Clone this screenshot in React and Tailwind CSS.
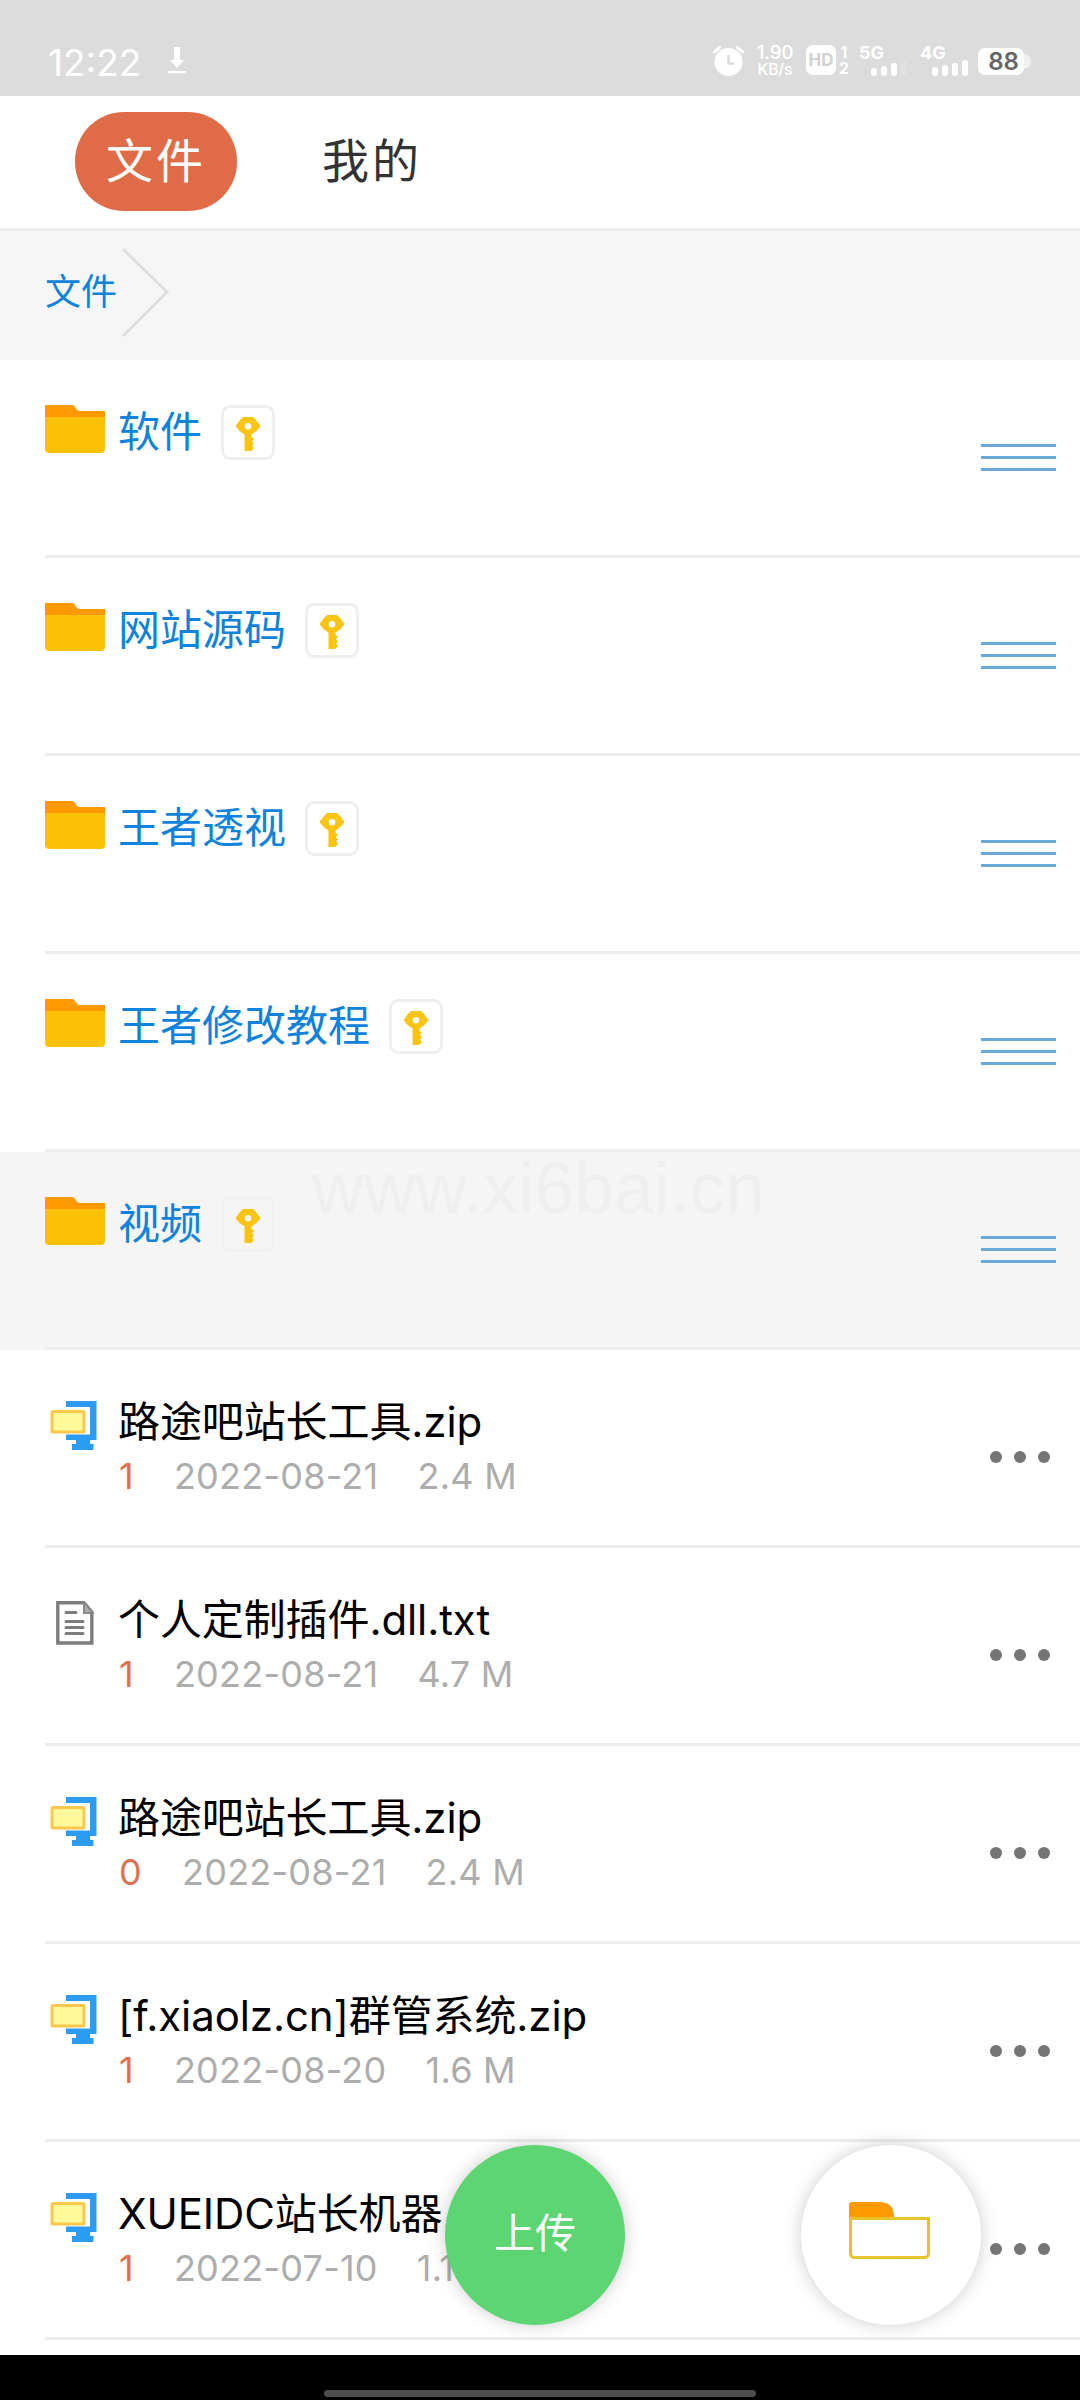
const folders = [
    { name: "软件" },
    { name: "网站源码" },
    { name: "王者透视" },
    { name: "王者修改教程" },
    { name: "视频", active: true },
];

const files = [
    { id: 1, name: "路途吧站长工具.zip", type: "zip", count: 1, date: "2022-08-21", size: "2.4 M" },
    { id: 2, name: "个人定制插件.dll.txt", type: "txt", count: 1, date: "2022-08-21", size: "4.7 M" },
    { id: 3, name: "路途吧站长工具.zip", type: "zip", count: 0, date: "2022-08-21", size: "2.4 M" },
    { id: 4, name: "[f.xiaolz.cn]群管系统.zip", type: "zip", count: 1, date: "2022-08-20", size: "1.6 M" },
    { id: 5, name: "XUEIDC站长机器.", type: "zip", count: 1, date: "2022-07-10", size: "1.1" },
];

function FolderIcon() {
    return (
        <svg width="60" height="48" viewBox="0 0 60 48" className="shrink-0">
            <path d="M0 0H27Q29 0 30 2L32 5Q33 6 35 6H60V20H0Z" fill="#ff9900" />
            <path d="M0 12H60V44Q60 48 56 48H4Q0 48 0 44Z" fill="#fdc107" />
        </svg>
    );
}

function KeyIcon() {
    return (
        <svg width="26" height="34" viewBox="0 0 26 34" className="mt-[2px]">
            <path
                d="M8 0H18L21 3L25.5 9L21.5 14L16.5 17.5V20L19 21.5L17 24L19 26.5L17 28.5L19 31L16 34H9.5V17.5L4.5 14L0.5 9L5 3Z M13 6A3.3 3.3 0 1 0 13 12.6A3.3 3.3 0 1 0 13 6Z"
                fill="#fbc312"
                fillRule="evenodd"
            />
        </svg>
    );
}

function ZipIcon() {
    return (
        <svg width="48" height="49" viewBox="0 0 48 49" className="shrink-0">
            <path d="M16 0H46.5V39H40V43H43.5V49H22V43H26V39H16V33.5H40V6H16Z" fill="#2b9cf2" />
            <rect x="2" y="10.5" width="32" height="20.5" rx="1" fill="#fff99c" stroke="#fbc84c" strokeWidth="3" />
        </svg>
    );
}

function TxtIcon() {
    return (
        <svg width="38" height="44" viewBox="0 0 38 44" className="shrink-0">
            <path d="M1.8 1.8H28L35.8 11V42H1.8Z" fill="#fff" stroke="#7d7d7d" strokeWidth="3.4" />
            <path d="M28 1V12H37Z" fill="#aaa" stroke="#8a8a8a" strokeWidth="2" />
            <path d="M10 11.5H20M10 20.5H27M10 26.5H27M10 32.5H27" stroke="#7d7d7d" strokeWidth="3" strokeLinecap="round" />
        </svg>
    );
}

function StatusBar() {
    return (
        <div className="flex h-24 items-start bg-[#dcdcdc] pl-12 text-white">
            <span className="mt-[44px] w-[119px] text-[37px] leading-[37px]">12:22</span>
            <svg width="20" height="27" viewBox="0 0 20 27" className="mt-[47px]">
                <path d="M7 0H13V13H17L10 21L3 13H7Z M0.5 24H19V26.3H0.5Z" fill="#fff" />
            </svg>

            <svg width="32" height="30" viewBox="0 0 32 30" className="mt-[46px] ml-[526px]">
                <circle cx="15.5" cy="16" r="14" fill="#fff" />
                <path d="M1.5 6L6.5 1.5M29.5 6L24.5 1.5" stroke="#fff" strokeWidth="3" strokeLinecap="round" />
                <path d="M15.5 9V17.5H21.5" stroke="#dcdcdc" strokeWidth="2.6" fill="none" />
            </svg>
            <div className="mt-[44px] ml-[9px] w-[42px] text-center">
                <div className="text-[18.5px] leading-[17px] font-medium">1.90</div>
                <div className="mt-px text-[15.5px] leading-[16px] font-medium">KB/s</div>
            </div>
            <div className="mt-[45px] ml-[10px] flex size-[30px] items-center justify-center rounded-[7px] bg-white text-[17px] leading-none font-bold text-[#d2d2d2]">
                HD
            </div>
            <div className="mt-[44px] ml-[2px] w-[12px] text-center text-[16px] leading-[16px] font-bold">
                <div>1</div>
                <div>2</div>
            </div>
            <div className="mt-[45px] ml-[9px] w-[50px]">
                <div className="text-[18px] leading-[15px] font-bold">5G</div>
                <div className="ml-[12px] flex h-[16px] items-end gap-1">
                    <span className="h-[8px] w-[6px] rounded-full bg-white"></span>
                    <span className="h-[10px] w-[6px] rounded-full bg-white"></span>
                    <span className="h-[13px] w-[6px] rounded-full bg-white"></span>
                    <span className="h-[16px] w-[6px] rounded-full bg-white/10"></span>
                </div>
            </div>
            <div className="mt-[45px] ml-[11px] w-[50px]">
                <div className="text-[18px] leading-[15px] font-bold">4G</div>
                <div className="ml-[12px] flex h-[16px] items-end gap-1">
                    <span className="h-[9px] w-[6px] rounded-full bg-white"></span>
                    <span className="h-[11px] w-[6px] rounded-full bg-white"></span>
                    <span className="h-[13px] w-[6px] rounded-full bg-white"></span>
                    <span className="h-[16px] w-[6px] rounded-full bg-white"></span>
                </div>
            </div>
            <div className="mt-[48px] ml-[8px] flex h-[27px] w-[46px] items-center justify-center rounded-[7px] bg-white pl-[5px] text-[24px] leading-none font-semibold text-[#666]">
                88
            </div>
            <div className="mt-[54px] h-[15px] w-[7px] rounded-r-full bg-[#f0f0f0]"></div>
        </div>
    );
}

function FolderRow({ folder }) {
    return (
        <div className={folder.active ? "bg-[#f5f5f5] pl-[45px]" : "bg-white pl-[45px]"}>
            <div className="flex h-[198px] items-start border-b-3 border-[#ededed] pr-6">
                <div className="mt-[45px]">
                    <FolderIcon />
                </div>
                <span className="mt-[48px] ml-[13px] text-[42px] leading-[48px] text-[#0f82dc]">{folder.name}</span>
                <div
                    className={`mt-[45px] ml-[19px] flex h-[55px] w-[54px] items-center justify-center rounded-[9px] border-3 ${
                        folder.active ? "border-[#f1f1f1]" : "border-[#efefef]"
                    }`}
                >
                    <KeyIcon />
                </div>
                <div className="mt-[84px] ml-auto flex w-[75px] flex-col gap-[9px]">
                    <span className="h-[3px] bg-[#67a9d8]"></span>
                    <span className="h-[3px] bg-[#67a9d8]"></span>
                    <span className="h-[3px] bg-[#67a9d8]"></span>
                </div>
            </div>
        </div>
    );
}

function FileRow({ file }) {
    return (
        <div className="bg-white pl-[45px]">
            <div className="flex h-[198px] items-start border-b-3 border-[#ededed] pr-[30px]">
                <div className="flex w-[73px] shrink-0">
                    {file.type === "zip" ? (
                        <div className="mt-[51px] ml-[5px]">
                            <ZipIcon />
                        </div>
                    ) : (
                        <div className="mt-[53px] ml-[11px]">
                            <TxtIcon />
                        </div>
                    )}
                </div>
                <div className="mt-[48px] whitespace-nowrap">
                    <div className="text-[42px] leading-[48px] tracking-[-0.1px] text-black">{file.name}</div>
                    <div className="mt-[8px] ml-px flex text-[36px] leading-[44px] tracking-[0.25px] text-[#adadad]">
                        <span className="text-[#dc7350]">{file.count}</span>
                        <span className="ml-[40px]">{file.date}</span>
                        <span className="ml-[39px]">{file.size}</span>
                    </div>
                </div>
                <div className="mt-[101px] ml-auto flex gap-3">
                    <span className="size-3 rounded-full bg-[#757575]"></span>
                    <span className="size-3 rounded-full bg-[#757575]"></span>
                    <span className="size-3 rounded-full bg-[#757575]"></span>
                </div>
            </div>
        </div>
    );
}

function App() {
    return (
        <div className="relative flex h-[2400px] w-[1080px] flex-col overflow-hidden bg-white font-['Inter','Noto_Sans_CJK_SC',sans-serif]">
            <StatusBar />

            <div className="flex h-[135px] items-start border-b-3 border-[#ececec] bg-white pt-4 pl-[75px] text-[47px] tracking-[3px]">
                <button className="h-[99px] w-[162px] rounded-[49px] bg-[#e06c47] text-white">文件</button>
                <button className="ml-[54px] h-[99px] w-[162px] text-[#333]">我的</button>
            </div>

            <div className="flex h-[129px] items-start bg-[#f6f6f6] pl-[45px]">
                <span className="mt-[37px] text-[36px] leading-[48px] text-[#0f82dc]">文件</span>
                <svg width="48" height="92" viewBox="0 0 48 92" className="mt-[15px] ml-[5px]">
                    <path d="M1 3L45 46L1 90" fill="none" stroke="#dedede" strokeWidth="3" />
                </svg>
            </div>

            <div className="h-[1995px]">
                {folders.map((folder) => (
                    <FolderRow key={folder.name} folder={folder} />
                ))}
                {files.map((file) => (
                    <FileRow key={file.id} file={file} />
                ))}
            </div>

            <div className="flex h-[45px] shrink-0 items-end justify-center bg-black pb-[3px]">
                <div className="h-[7px] w-[432px] rounded-full bg-[#4d4d4d]"></div>
            </div>

            <div className="pointer-events-none absolute top-[1148px] left-[312px] font-['Liberation_Sans',sans-serif] text-[71.5px] leading-[80px] text-[#efefef]">
                www.xi6bai.cn
            </div>

            <button className="absolute top-[2145px] left-[445px] size-[180px] rounded-full bg-[#5ed573] pb-[2px] text-[41px] text-white shadow-[0_0_18px_rgba(0,0,0,0.2)]">
                上传
            </button>
            <button className="absolute top-[2145px] left-[801px] flex size-[180px] items-start justify-center rounded-full bg-white pt-[57px] pr-[3px] shadow-[0_0_18px_rgba(0,0,0,0.2)]">
                <svg width="81" height="58" viewBox="0 0 81 58">
                    <path d="M1.5 16.5H79.5V51Q79.5 55.5 75 55.5H6Q1.5 55.5 1.5 51Z" fill="#fff" stroke="#e8c42c" strokeWidth="3" />
                    <path d="M0 3Q0 0 3 0H30Q45 0 45 15H0Z" fill="#ff9900" />
                </svg>
            </button>
        </div>
    );
}

export default App;
